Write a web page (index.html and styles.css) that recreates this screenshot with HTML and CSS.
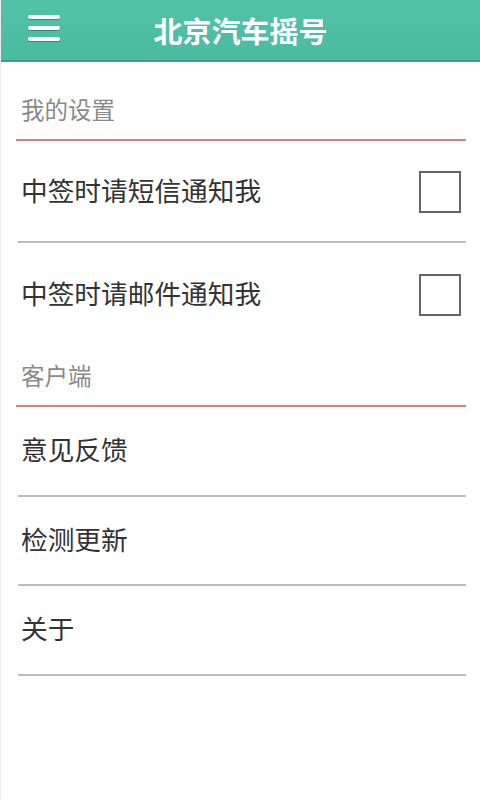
FILE: index.html
```html
<!DOCTYPE html>
<html lang="zh-CN">
<head>
    <meta charset="UTF-8">
    <meta name="viewport" content="width=device-width, initial-scale=1.0">
    <title>北京汽车摇号</title>
    <link rel="stylesheet" href="styles.css">
</head>
<body>
    <div id="topbar">
        <div class="menu-btn"> <!-- drawer toggle -->
            <span></span>
            <span></span>
            <span></span>
        </div>
        <h1>北京汽车摇号</h1>
    </div>

    <div id="settings">
        <div class="section-title">我的设置</div>
        <div class="row check-row">
            <span>中签时请短信通知我</span>
            <div class="checkbox"></div>
        </div>
        <div class="row check-row no-line">
            <span>中签时请邮件通知我</span>
            <div class="checkbox"></div>
        </div>

        <div class="section-title">客户端</div>
        <div class="row">意见反馈</div>
        <div class="row">检测更新</div>
        <div class="row">关于</div>
    </div>
</body>
</html>
```

FILE: styles.css
```css
html, body {
    margin: 0;
    height: 100%;
}
body {
    background: #fff;
    border-left: 1px solid #ececec;
    font-family: "Noto Sans CJK SC", "Noto Sans", sans-serif;
    color: #333;
}

#topbar {
    height: 60px;
    background: linear-gradient(#52c3a7, #4bbb9f);
    border-bottom: 2px solid #3c9f86;
    display: flex;
    align-items: center;
    position: relative;
}
#topbar h1 {
    flex: 1;
    margin: 0;
    text-align: center;
    color: #fff;
    font-size: 29px;
    font-weight: bold;
    line-height: 62px;
}
.menu-btn {
    position: absolute;
    left: 27px;
    top: 15px;
    display: flex;
    flex-direction: column;
    gap: 7px;
}
.menu-btn span {
    display: block;
    width: 32px;
    height: 4px;
    background: #fff;
    border-radius: 2px;
    box-shadow: 0 1px 0 #2f8c73;
}

#settings {
    padding-top: 17px;
}
.section-title {
    height: 62px;
    margin: 0 14px 0 15px;
    padding: 0 5px;
    box-sizing: border-box;
    display: flex;
    align-items: center;
    font-size: 23.5px;
    color: #8a8a8a;
    border-bottom: 2px solid #d4827b;
}
.row {
    height: 83.5px;
    margin: 0 14px 0 17px;
    padding: 0 3px 4px;
    display: flex;
    align-items: center;
    font-size: 26.7px;
    color: #333;
    border-bottom: 2px solid #bcbcbc;
}
.check-row {
    height: 96px;
    justify-content: space-between;
    padding-right: 5px;
}
.no-line {
    border-bottom: none;
    height: 98px;
}
.checkbox {
    width: 38px;
    height: 38px;
    border: 2px solid #666;
    margin-top: 6px;
}
```
